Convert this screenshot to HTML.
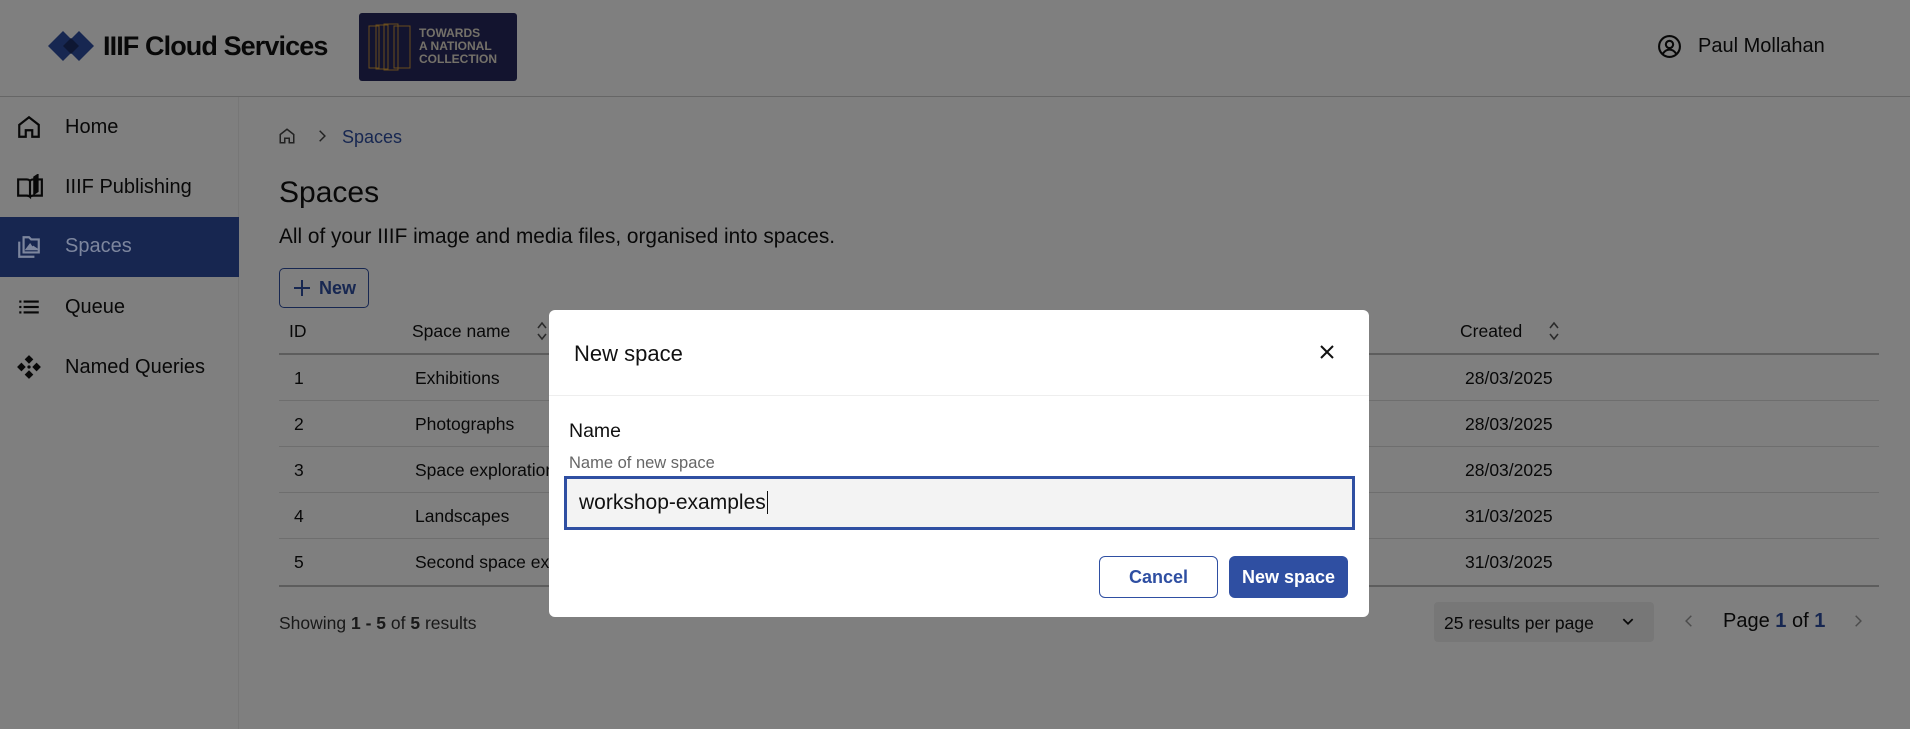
<!DOCTYPE html>
<html><head><meta charset="utf-8"><style>
*{box-sizing:border-box;margin:0;padding:0}
body{width:1910px;height:729px;position:relative;overflow:hidden;background:#fff;font-family:"Liberation Sans",Arial,sans-serif;color:#111}
.a{position:absolute}
.hdr{left:0;top:0;width:1910px;height:97px;border-bottom:1px solid #ccc;background:#fff}
.side{left:0;top:97px;width:239px;height:632px;background:#fff;border-right:1px solid #eee}
.nav{position:absolute;left:0;width:239px;height:60px;display:flex;align-items:center;font-size:20px}
.nav svg{position:absolute;left:16px}
.nav span{position:absolute;left:65px}
.row{position:absolute;left:279px;width:1600px;height:46px;border-bottom:1px solid #ddd;font-size:17.5px}
.row span{position:absolute;top:13px}
.ov{left:0;top:0;width:1910px;height:729px;background:rgba(0,0,0,.5)}
.sort{position:absolute;width:12px;height:22px}
</style></head><body>
<div class="a hdr">
  <svg class="a" style="left:48px;top:31px" width="46" height="30" viewBox="0 0 46 30"><path d="M15 0L30 15 15 30 0 15Z" fill="#2f4fa2"/><path d="M31 0L46 15 31 30 16 15Z" fill="#2f4fa2"/><path d="M23 7L31 15 23 23 15 15Z" fill="#1c2f66"/></svg>
  <div class="a" style="left:103px;top:31px;font-size:27px;font-weight:bold;letter-spacing:-0.9px">IIIF Cloud Services</div>
  <div class="a" style="left:359px;top:13px;width:158px;height:68px;background:#27285e;border-radius:3px">
    <svg class="a" style="left:9px;top:10px" width="46" height="48"><g fill="none" stroke="#d49a3a" stroke-width="1"><rect x="1" y="3" width="10" height="42"/><rect x="8" y="2" width="12" height="44"/><rect x="16" y="1" width="14" height="46"/><rect x="26" y="3" width="16" height="42"/></g></svg>
    <div class="a" style="left:60px;top:14px;color:#e8e2d2;font-size:12px;font-weight:bold;line-height:13px">TOWARDS<br>A NATIONAL<br>COLLECTION</div>
  </div>
  <svg class="a" style="left:1657px;top:34px" width="25" height="25" viewBox="0 0 24 24" fill="none" stroke="#111" stroke-width="2"><circle cx="12" cy="12" r="10"/><circle cx="12" cy="10" r="3.5"/><path d="M5.5 19c2-3 4-4 6.5-4s4.5 1 6.5 4"/></svg>
  <div class="a" style="left:1698px;top:35px;font-size:20px">Paul Mollahan</div>
</div>
<div class="a side">
  <div class="nav" style="top:0"><svg width="26" height="26" viewBox="0 0 24 24" fill="none" stroke="#111" stroke-width="2"><path d="M3 10l9-7 9 7v11h-6v-6h-6v6H3z"/></svg><span>Home</span></div>
  <div class="nav" style="top:60px"><svg width="28" height="26" viewBox="0 0 26 24" fill="none" stroke="#111" stroke-width="2"><path d="M2 5h8c2 0 3 1 3 2v14c-1-1-2-1-3-1H2z"/><path d="M13 7c0-1 1-2 3-2h8v15h-8c-1 0-2 0-3 1"/><path d="M17 3l3-2v15l-3 2z" fill="#111"/></svg><span>IIIF Publishing</span></div>
  <div class="nav" style="top:180px"><svg width="26" height="26" viewBox="0 0 24 24" fill="#111"><rect x="3" y="6" width="2" height="2"/><rect x="7" y="6" width="14" height="2"/><rect x="3" y="11" width="2" height="2"/><rect x="7" y="11" width="14" height="2"/><rect x="3" y="16" width="2" height="2"/><rect x="7" y="16" width="14" height="2"/></svg><span>Queue</span></div>
  <div class="nav" style="top:240px"><svg width="26" height="26" viewBox="0 0 24 24" fill="#111"><path d="M12 1l4 4-4 4-4-4z"/><path d="M12 15l4 4-4 4-4-4z"/><path d="M5 8l4 4-4 4-4-4z"/><path d="M19 8l4 4-4 4-4-4z"/><circle cx="12" cy="12" r="1.5"/></svg><span>Named Queries</span></div>
</div>
<svg class="a" style="left:278px;top:127px" width="18" height="18" viewBox="0 0 24 24" fill="none" stroke="#444" stroke-width="2"><path d="M3 10l9-7 9 7v11h-6v-6h-6v6H3z"/></svg>
<svg class="a" style="left:315px;top:129px" width="14" height="14" viewBox="0 0 24 24" fill="none" stroke="#444" stroke-width="2.5"><path d="M8 3l9 9-9 9"/></svg>
<div class="a" style="left:342px;top:127px;font-size:18px;color:#2f4fa2">Spaces</div>
<div class="a" style="left:279px;top:176px;font-size:30px">Spaces</div>
<div class="a" style="left:279px;top:225px;font-size:20.8px">All of your IIIF image and media files, organised into spaces.</div>
<div class="a" style="left:279px;top:268px;width:90px;height:40px;border:1px solid #2f4fa2;border-radius:5px;color:#2f4fa2;font-size:18px;font-weight:bold;display:flex;align-items:center;padding-left:13px"><svg width="18" height="18" viewBox="0 0 18 18" stroke="#2f4fa2" stroke-width="2"><path d="M9 1v16M1 9h16"/></svg><span style="margin-left:8px">New</span></div>
<div class="a" style="left:289px;top:321px;font-size:17.5px">ID</div>
<div class="a" style="left:412px;top:321px;font-size:17.5px">Space name</div>
<svg class="sort" style="left:536px;top:320px" viewBox="0 0 12 22" fill="none" stroke="#555" stroke-width="1.6"><path d="M2 8l4-5 4 5M2 14l4 5 4-5"/></svg>
<div class="a" style="left:1460px;top:321px;font-size:17.5px">Created</div>
<svg class="sort" style="left:1548px;top:320px" viewBox="0 0 12 22" fill="none" stroke="#555" stroke-width="1.6"><path d="M2 8l4-5 4 5M2 14l4 5 4-5"/></svg>
<div class="a" style="left:279px;top:353px;width:1600px;height:2px;background:#bbb"></div>
<div class="row" style="top:355px"><span style="left:15px">1</span><span style="left:136px">Exhibitions</span><span style="left:1186px">28/03/2025</span></div>
<div class="row" style="top:401px"><span style="left:15px">2</span><span style="left:136px">Photographs</span><span style="left:1186px">28/03/2025</span></div>
<div class="row" style="top:447px"><span style="left:15px">3</span><span style="left:136px">Space exploration</span><span style="left:1186px">28/03/2025</span></div>
<div class="row" style="top:493px"><span style="left:15px">4</span><span style="left:136px">Landscapes</span><span style="left:1186px">31/03/2025</span></div>
<div class="row" style="top:539px;border-bottom:2px solid #bbb;height:48px"><span style="left:15px">5</span><span style="left:136px">Second space example</span><span style="left:1186px">31/03/2025</span></div>
<div class="a" style="left:279px;top:613px;font-size:17.5px;color:#333">Showing <b>1 - 5</b> of <b>5</b> results</div>
<div class="a" style="left:1434px;top:602px;width:220px;height:40px;background:#eee;border-radius:4px;font-size:17.5px;padding:11px 0 0 10px">25 results per page<svg class="a" style="left:186px;top:13px" width="16" height="14" viewBox="0 0 24 24" fill="none" stroke="#111" stroke-width="3"><path d="M4 7l8 8 8-8"/></svg></div>
<svg class="a" style="left:1682px;top:612px" width="14" height="18" viewBox="0 0 24 24" fill="none" stroke="#999" stroke-width="2.5"><path d="M16 3l-9 9 9 9"/></svg>
<div class="a" style="left:1723px;top:610px;font-size:20px">Page <b style="color:#2f4fa2">1</b> of <b style="color:#2f4fa2">1</b></div>
<svg class="a" style="left:1851px;top:612px" width="14" height="18" viewBox="0 0 24 24" fill="none" stroke="#999" stroke-width="2.5"><path d="M8 3l9 9-9 9"/></svg>
<div class="a ov"></div>
<div class="a" style="left:0;top:217px;width:239px;height:60px;background:#172650;color:#7d869e;font-size:20px">
  <svg class="a" style="left:16px;top:17px" width="26" height="26" viewBox="0 0 24 24" fill="none" stroke="#7d869e" stroke-width="2"><path d="M7 3h5l2 2h7v12H7z"/><path d="M3 7v14h14"/><path d="M10 14l3-4 2 3 1-1 3 2z" fill="#7d869e"/></svg>
  <span class="a" style="left:65px;top:18px">Spaces</span>
</div>
<div class="a" style="left:549px;top:310px;width:820px;height:307px;background:#fff;border-radius:6px">
  <div class="a" style="left:25px;top:31px;font-size:22px">New space</div>
  <svg class="a" style="left:770px;top:34px" width="16" height="16" viewBox="0 0 16 16" stroke="#111" stroke-width="2"><path d="M2 2l12 12M14 2L2 14"/></svg>
  <div class="a" style="left:0;top:85px;width:820px;height:1px;background:#eee"></div>
  <div class="a" style="left:20px;top:110px;font-size:19.5px">Name</div>
  <div class="a" style="left:20px;top:144px;font-size:16.5px;color:#666">Name of new space</div>
  <div class="a" style="left:15px;top:166px;width:791px;height:54px;border:3px solid #2f4fa2;background:#f3f3f3;font-size:21px;padding:12px 0 0 12px">workshop-examples<span style="border-left:1px solid #111;margin-left:1px"></span></div>
  <div class="a" style="left:550px;top:246px;width:119px;height:42px;border:1px solid #2f4fa2;border-radius:6px;color:#2f4fa2;font-size:18px;font-weight:bold;text-align:center;line-height:40px">Cancel</div>
  <div class="a" style="left:680px;top:246px;width:119px;height:42px;background:#2f4fa2;border-radius:6px;color:#fff;font-size:18px;font-weight:bold;text-align:center;line-height:42px">New space</div>
</div>
</body></html>
